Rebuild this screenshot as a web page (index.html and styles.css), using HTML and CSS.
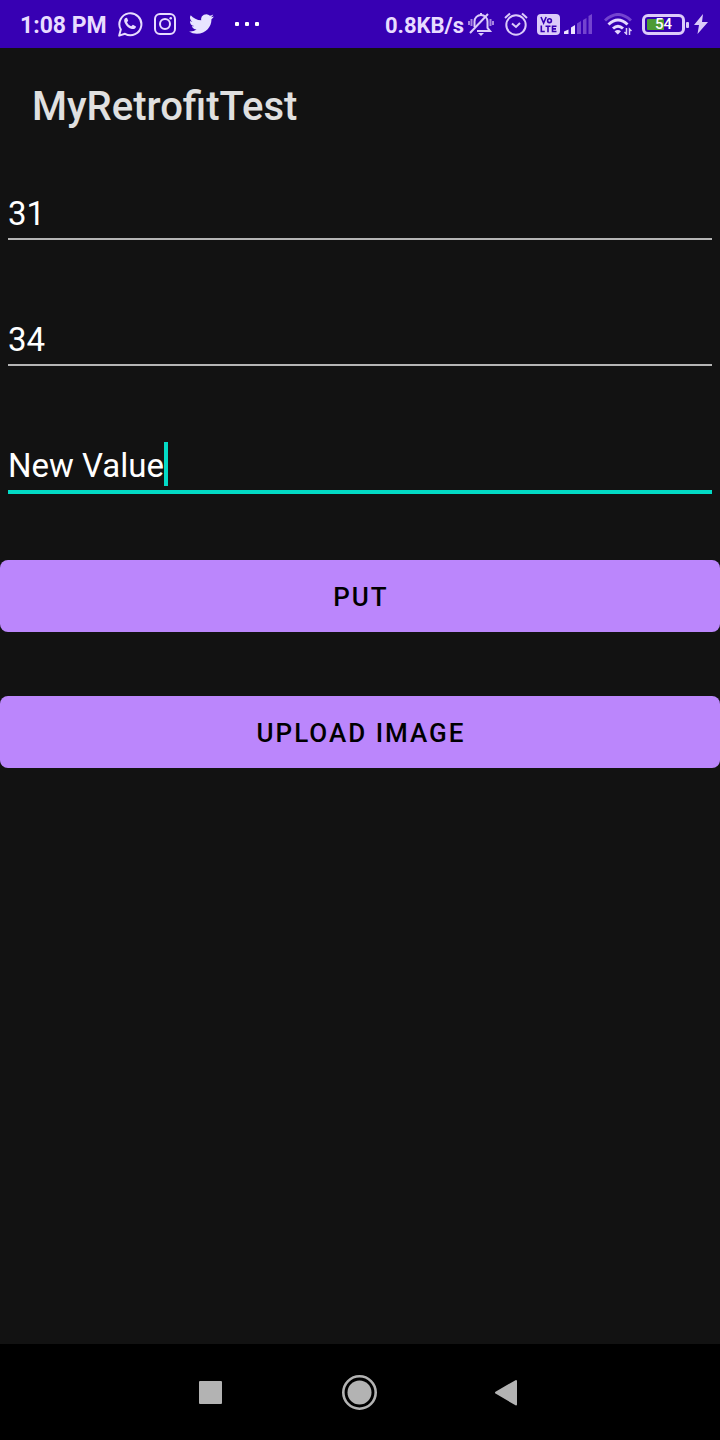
FILE: index.html
```html
<!DOCTYPE html>
<html lang="en">
<head>
<meta charset="utf-8">
<meta name="viewport" content="width=device-width, initial-scale=1">
<title>MyRetrofitTest</title>
<link rel="stylesheet" href="styles.css">
</head>
<body>
<div class="status-bar">
  <div class="status-group">
    <span class="status-text">1:08 PM</span>
    <svg class="whatsapp" width="26" height="28" viewBox="0 0 26 28" fill="none">
      <path d="M2.200 25.600 3.800 19.600A11 11 0 1 1 8 23.800Z" stroke="#e8dcff" stroke-width="2" stroke-linejoin="round"/>
      <path d="M9.200 7.800c-2.200.8-2.600 3-1.400 5.200 1.600 3.200 4 5.200 7 6 2.200.5 4-.6 4.200-2.600l-3.100-1.700-1.700 1.500c-2-.8-3.400-2.200-4.200-4l1.200-1.500-1.100-2.700z" fill="#e8dcff"/>
    </svg>
    <svg class="instagram" width="24" height="24" viewBox="0 0 24 24" fill="none" stroke="#e8dcff" stroke-width="2">
      <rect x="2" y="2" width="20" height="20" rx="5"/>
      <circle cx="12" cy="12" r="5"/>
      <circle cx="17.700" cy="6.300" r="1.300" fill="#e8dcff" stroke="none"/>
    </svg>
    <svg class="twitter" width="25" height="24" viewBox="0 0 24 24" preserveAspectRatio="none" fill="#e8e4ff">
      <path d="M23.950 4.570a10 10 0 0 1-2.820.770 4.960 4.960 0 0 0 2.160-2.720c-.950.550-2 .950-3.130 1.180a4.920 4.920 0 0 0-8.380 4.480C7.690 8.090 4.070 6.130 1.640 3.160a4.920 4.920 0 0 0 1.520 6.570 4.900 4.900 0 0 1-2.230-.610v.060a4.920 4.920 0 0 0 3.950 4.830 5 5 0 0 1-2.210.080 4.940 4.940 0 0 0 4.600 3.420A9.870 9.870 0 0 1 0 19.540a13.990 13.990 0 0 0 7.550 2.210c9.050 0 14-7.500 14-13.980 0-.210 0-.420-.020-.630a9.940 9.940 0 0 0 2.420-2.570z"/>
    </svg>
    <svg class="more" width="26" height="6" viewBox="0 0 26 6" fill="#fff">
      <rect x="1" y="1" width="4" height="4" rx="1"/><rect x="11" y="1" width="4" height="4" rx="1"/><rect x="21" y="1" width="4" height="4" rx="1"/>
    </svg>
  </div>
  <div class="status-group">
    <span class="status-text status-speed">0.8KB/s</span>
    <svg class="bell" width="26" height="24" viewBox="0 0 26 24" fill="none" stroke="#dccbfa" stroke-width="2">
      <path d="M6.500 15V9.500a6.500 6.500 0 0 1 13 0v6.500l2.500 3H9M13 1v2"/>
      <path d="M10 21h6l-3 3z" fill="#dccbfa" stroke="none"/>
      <path d="M2 21 20 2"/>
      <path d="M3.500 7v7M1 9v4M22.500 7v7M25 9v4" stroke="#a785e0"/>
    </svg>
    <svg class="alarm" width="24" height="24" viewBox="0 0 24 24" fill="none" stroke="#dccbfa" stroke-width="2">
      <circle cx="12" cy="13" r="9.700"/><path d="M1 6 6 1.500M18 1.500 23 6"/><path d="m8 11.500 4 3.500 4-4"/>
    </svg>
    <svg class="volte" width="23" height="21" viewBox="0 0 23 21">
      <rect width="23" height="21" rx="4" fill="#dccbfa"/>
      <g fill="none" stroke="#3700b3" stroke-width="1.600">
        <path d="m4 3 2.600 6L9.200 3M4.300 11.500v6h3.500M8.500 12.300h5M11 12.300v6M19.500 12.300h-4v5.200h4M15.500 14.900h3.500"/><circle cx="12.500" cy="6.700" r="1.900"/>
      </g>
    </svg>
    <svg class="signal" width="28" height="20" viewBox="0 0 28 20" fill="#7444cf">
      <path d="M0 17.500 4.500 15.500V20H0zM7 13.500 11 11v9H7z" fill="#eee4ff"/><path d="m13 9.500 4-2.500v13h-4zM19 6l3.500-2v16H19zM24.500 2 28 0v20h-3.500z"/>
    </svg>
    <svg class="wifi" width="28" height="22" viewBox="0 0 28 22" fill="none" stroke-width="3">
      <path d="M1 7.500q13-12 26 0" stroke="#7444cf"/>
      <path d="M4.500 11.500q9.500-9 19 0M9 15.500q5-4.500 10 0" stroke="#e5d8ff"/>
      <path d="m10.500 18.300q3.500-2.500 6.500 0l-3.200 3.200z" fill="#e5d8ff"/>
      <path d="M22.500 15v6l-2-2M25.500 22v-6l2 2" stroke="#dccbfa" stroke-width="1.500"/>
    </svg>
    <div class="battery"><span class="battery-level">54</span></div>
    <svg class="bolt" width="14" height="20" viewBox="0 0 14 20" fill="#dccbfa"><path d="M9 0 0 11h5L3.500 20 14 8H8z"/></svg>
  </div>
</div>
<header class="app-bar"><h1 class="app-title">MyRetrofitTest</h1></header>
<main class="content">
  <form class="form">
    <div class="field"><input class="field-input" type="text" value="31" aria-label="User ID"></div>
    <div class="field"><input class="field-input" type="text" value="34" aria-label="ID"></div>
    <div class="field"><input class="field-input field-active" type="text" value="New Value" aria-label="Value"><span class="caret"></span></div>
    <div class="actions">
      <button class="button" type="button">PUT</button>
      <button class="button" type="button">UPLOAD IMAGE</button>
    </div>
  </form>
</main>
<nav class="nav-bar">
  <button class="nav-button" type="button" aria-label="Recent apps"><svg width="36" height="36" viewBox="0 0 36 36" fill="#b3b3b3"><rect x="7" y="7" width="23" height="23" rx="1"/></svg></button>
  <button class="nav-button" type="button" aria-label="Home"><svg width="36" height="36" viewBox="0 0 36 36"><circle cx="17.500" cy="18.500" r="16.200" fill="none" stroke="#b3b3b3" stroke-width="2.600"/><circle cx="17.500" cy="18.500" r="12" fill="#b3b3b3"/></svg></button>
  <button class="nav-button" type="button" aria-label="Back"><svg width="36" height="36" viewBox="0 0 36 36" fill="#b3b3b3" stroke="#b3b3b3" stroke-width="2" stroke-linejoin="round"><path d="M4 18.700 24 7V30.500z"/></svg></button>
</nav>
</body>
</html>
```
FILE: styles.css
```css
* { box-sizing: border-box; }

body {
  margin: 0;
  min-height: 100vh;
  display: flex;
  flex-direction: column;
  background: #121212;
  color: #fff;
  font-family: Roboto, "Noto Sans", sans-serif;
}

svg { display: block; flex: none; }

.status-bar {
  height: 48px;
  padding: 0 12px 0 20px;
  display: flex;
  justify-content: space-between;
  align-items: center;
  background: #3700b3;
}

.status-group { display: flex; align-items: center; }

.status-text {
  font-size: 23px;
  line-height: 28px;
  font-weight: 700;
  color: #e8dcff;
  white-space: nowrap;
  padding-top: 3px;
}

.status-speed { font-size: 22px; }

.whatsapp { margin-left: 10px; }
.instagram { margin-left: 10px; }
.twitter { margin-left: 12px; }
.more { margin-left: 20px; }
.bell { margin-left: 4px; }
.alarm { margin-left: 10px; }
.volte { margin-left: 9px; }
.signal { margin-left: 4px; }
.wifi { margin-left: 12px; }
.bolt { margin-left: 9px; }

.battery {
  position: relative;
  width: 43px;
  height: 21px;
  margin-left: 10px;
  padding: 2px;
  border: 3px solid #dccbfa;
  border-radius: 6px;
  background: linear-gradient(90deg, #4d9b35 50%, transparent 50%) content-box;
  display: flex;
  align-items: center;
  justify-content: center;
}

.battery::after {
  content: "";
  position: absolute;
  right: -7px;
  top: 5px;
  width: 3px;
  height: 6px;
  border-radius: 1px;
  background: #dccbfa;
}

.battery-level {
  font-size: 15px;
  line-height: 16px;
  font-weight: 500;
  color: #fff;
}

.app-bar {
  height: 112px;
  padding: 6px 32px 0;
  display: flex;
  align-items: center;
}

.app-title {
  margin: 0;
  font-size: 40px;
  line-height: 48px;
  font-weight: 500;
  color: #e0e0e0;
}

.content { flex: 1; }

.form {
  padding-top: 30px;
  display: flex;
  flex-direction: column;
  gap: 74px;
}

.field {
  position: relative;
  height: 52px;
  padding: 0 8px;
}

.field-input {
  display: block;
  width: 100%;
  height: 50px;
  padding: 2px 0 4px;
  border: 0;
  border-bottom: 2px solid #b5b5b5;
  border-radius: 0;
  outline: 0;
  background: transparent;
  color: #fff;
  font-family: inherit;
  font-size: 33px;
}

.field-active {
  height: 52px;
  border-bottom: 4px solid #03dac5;
}

.caret {
  position: absolute;
  left: 164px;
  top: 0;
  width: 4px;
  height: 44px;
  background: #03dac5;
}

.actions {
  margin-top: -8px;
  display: flex;
  flex-direction: column;
  gap: 64px;
}

.button {
  height: 72px;
  padding: 2px 16px 0 18px;
  border: 0;
  border-radius: 8px;
  background: #bb86fc;
  color: #000;
  font-family: inherit;
  font-size: 26px;
  font-weight: 500;
  letter-spacing: 2px;
}

.nav-bar {
  height: 96px;
  display: flex;
  justify-content: center;
  background: #000;
}

.nav-button {
  width: 150px;
  padding: 0;
  border: 0;
  background: transparent;
  display: flex;
  align-items: center;
  justify-content: center;
}
```
